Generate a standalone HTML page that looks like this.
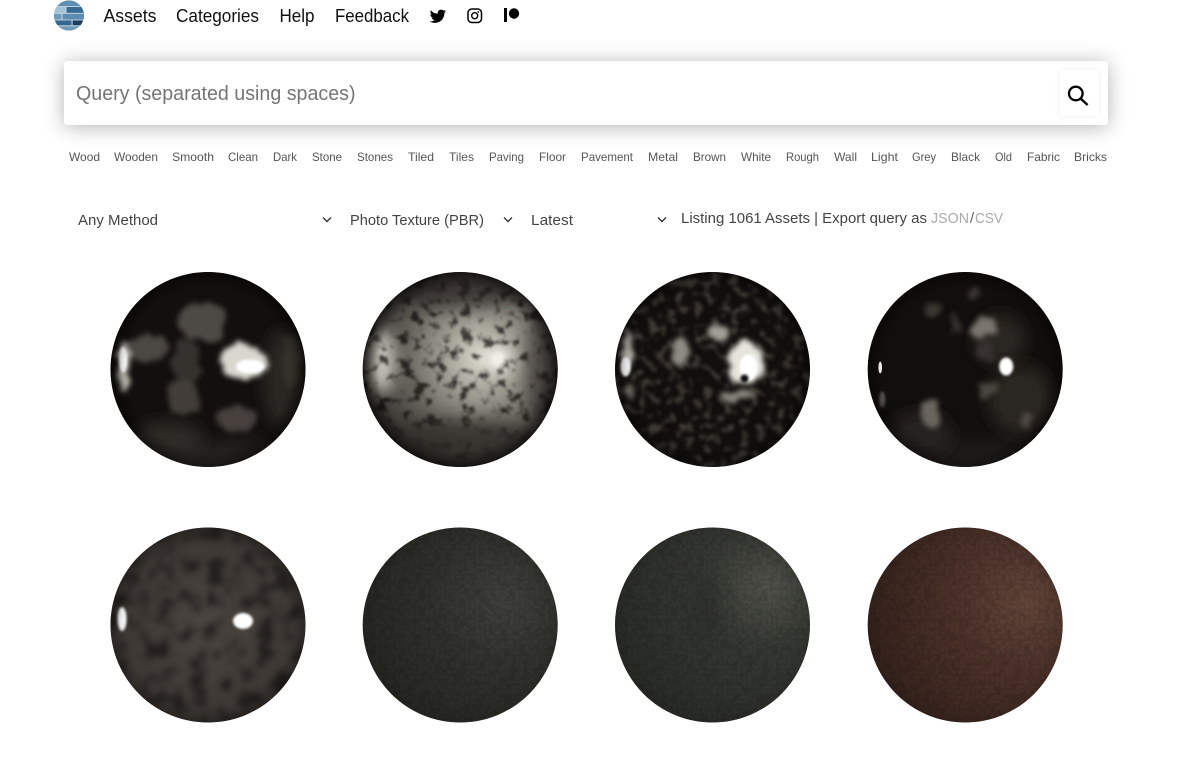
<!DOCTYPE html>
<html><head><meta charset="utf-8"><title>Assets</title>
<style>
html,body{margin:0;padding:0;background:#fff;width:1192px;height:760px;overflow:hidden}
.card{position:absolute;left:64px;top:61px;width:1044px;height:64px;background:#fff;border-radius:3px;box-shadow:0 2px 20px rgba(0,0,0,.3)}
.btn{position:absolute;left:1060px;top:70px;width:39px;height:46px;background:#fff;border-radius:2px;box-shadow:0 0 6px rgba(0,0,0,.07)}
svg{position:absolute;left:0;top:0}
text{font-family:"Liberation Sans",sans-serif}
.n{font-size:18px;fill:#111}
.t{font-size:12px;fill:#555}
.d{font-size:15px;fill:#444}
</style></head><body>
<div class="card"></div><div class="btn"></div>
<svg width="1192" height="760" viewBox="0 0 1192 760" xmlns="http://www.w3.org/2000/svg">
<defs>
<clipPath id="c"><circle r="97.5"/></clipPath>
<clipPath id="lg"><circle cx="69" cy="15.5" r="15"/></clipPath>
<filter id="b1" x="-50%" y="-50%" width="200%" height="200%"><feGaussianBlur stdDeviation="1.2"/></filter>
<filter id="b2" x="-50%" y="-50%" width="200%" height="200%"><feGaussianBlur stdDeviation="2.5"/></filter>
<filter id="b5" x="-60%" y="-60%" width="220%" height="220%"><feGaussianBlur stdDeviation="8"/></filter>
<filter id="rough" x="-100" y="-100" width="200" height="200" filterUnits="userSpaceOnUse"><feTurbulence type="fractalNoise" baseFrequency=".08" numOctaves="3" seed="5" result="n"/><feDisplacementMap in="SourceGraphic" in2="n" scale="12" xChannelSelector="R" yChannelSelector="G"/><feGaussianBlur stdDeviation="2.600"/></filter>
<filter id="splat" x="-100" y="-100" width="200" height="200" filterUnits="userSpaceOnUse" color-interpolation-filters="sRGB"><feTurbulence type="fractalNoise" baseFrequency=".085" numOctaves="4" seed="7"/><feColorMatrix values="0 0 0 0 .05 0 0 0 0 .045 0 0 0 0 .04 6 0 0 0 -3.200"/><feGaussianBlur stdDeviation="1.100"/></filter>
<filter id="spots" x="-100" y="-100" width="200" height="200" filterUnits="userSpaceOnUse" color-interpolation-filters="sRGB"><feTurbulence type="fractalNoise" baseFrequency=".11" numOctaves="2" seed="12"/><feColorMatrix values="0 0 0 0 .4 0 0 0 0 .37 0 0 0 0 .34 6 0 0 0 -3.100"/><feGaussianBlur stdDeviation="1.700"/></filter>
<filter id="mottle" x="-100" y="-100" width="200" height="200" filterUnits="userSpaceOnUse" color-interpolation-filters="sRGB"><feTurbulence type="fractalNoise" baseFrequency=".06" numOctaves="3" seed="4"/><feColorMatrix values="0 0 0 0 .1 0 0 0 0 .09 0 0 0 0 .085 4 0 0 0 -1.900"/><feGaussianBlur stdDeviation="3"/></filter>
<filter id="leather" x="-100" y="-100" width="200" height="200" filterUnits="userSpaceOnUse" color-interpolation-filters="sRGB"><feTurbulence type="turbulence" baseFrequency=".2" numOctaves="1" seed="3"/><feColorMatrix values="0 0 0 0 0 0 0 0 0 0 0 0 0 0 0 -5 0 0 0 1"/><feGaussianBlur stdDeviation=".4"/></filter>
<radialGradient id="rim" cx="50%" cy="50%" r="50%"><stop offset=".84" stop-color="#000" stop-opacity="0"/><stop offset=".97" stop-color="#000" stop-opacity=".55"/><stop offset="1" stop-color="#000" stop-opacity=".75"/></radialGradient>
<linearGradient id="lower" x1="0" y1="0" x2="0" y2="1"><stop offset=".8" stop-color="#6b665f" stop-opacity="0"/><stop offset="1" stop-color="#6b665f" stop-opacity=".35"/></linearGradient>
<radialGradient id="metal" cx="60%" cy="44%" r="62%"><stop offset="0" stop-color="#d6d6ca"/><stop offset=".28" stop-color="#a3a398"/><stop offset=".62" stop-color="#65625b"/><stop offset="1" stop-color="#2c2926"/></radialGradient>
<radialGradient id="g1" cx="72%" cy="38%" r="75%"><stop offset="0" stop-color="#40413b"/><stop offset=".5" stop-color="#30312c"/><stop offset="1" stop-color="#262722"/></radialGradient>
<radialGradient id="g2" cx="78%" cy="30%" r="80%"><stop offset="0" stop-color="#50524b"/><stop offset=".4" stop-color="#363832"/><stop offset="1" stop-color="#2a2c27"/></radialGradient>
<radialGradient id="br" cx="80%" cy="38%" r="82%"><stop offset="0" stop-color="#624539"/><stop offset=".45" stop-color="#4b3229"/><stop offset="1" stop-color="#35221c"/></radialGradient>
<radialGradient id="gm" cx="50%" cy="50%" r="55%"><stop offset="0" stop-color="#4c4641"/><stop offset="1" stop-color="#3a3531"/></radialGradient>
</defs>

<!-- logo -->
<g clip-path="url(#lg)">
<rect x="54" y="0" width="30" height="31" fill="#3f6f96"/>
<rect x="54" y="0" width="30" height="7" fill="#5f8fb0"/>
<rect x="54" y="7" width="12" height="6" fill="#a3c2d8"/><rect x="66" y="7" width="18" height="6" fill="#386a94"/>
<rect x="54" y="14" width="8" height="6" fill="#6f9bbb"/><rect x="62" y="14" width="22" height="6" fill="#5c8cb0"/>
<rect x="54" y="20.500" width="18" height="5" fill="#35668f"/><rect x="73" y="20.500" width="11" height="5" fill="#1d3f5c"/>
<rect x="54" y="26" width="30" height="5" fill="#6f9ab8"/>
<path d="M54 6.500H84M54 13.300H84M54 20H84M54 25.800H84M66 6.500V13.300M62 13.300V20M72 20V25.800" stroke="#d8e6ef" stroke-width=".8" fill="none"/>
</g>

<!-- nav -->
<text class="n" x="103.500" y="22" textLength="53" lengthAdjust="spacingAndGlyphs">Assets</text>
<text class="n" x="176" y="22" textLength="83" lengthAdjust="spacingAndGlyphs">Categories</text>
<text class="n" x="279.500" y="22" textLength="35" lengthAdjust="spacingAndGlyphs">Help</text>
<text class="n" x="335" y="22" textLength="74" lengthAdjust="spacingAndGlyphs">Feedback</text>
<path transform="translate(428.500,6.500) scale(.78)" fill="#000" d="M22.46,6C21.69,6.35 20.86,6.58 20,6.69C20.88,6.16 21.56,5.32 21.88,4.31C21.05,4.81 20.13,5.16 19.16,5.36C18.37,4.5 17.26,4 16,4C13.65,4 11.73,5.92 11.73,8.29C11.73,8.63 11.77,8.96 11.84,9.27C8.28,9.09 5.11,7.38 3,4.79C2.63,5.42 2.42,6.16 2.42,6.94C2.42,8.43 3.17,9.75 4.33,10.5C3.62,10.5 2.96,10.3 2.38,10C2.38,10 2.38,10 2.38,10.03C2.38,12.11 3.86,13.85 5.82,14.24C5.46,14.34 5.08,14.39 4.69,14.39C4.42,14.39 4.15,14.36 3.89,14.31C4.43,16 6,17.26 7.89,17.29C6.43,18.45 4.58,19.13 2.56,19.13C2.22,19.13 1.88,19.11 1.54,19.07C3.44,20.29 5.7,21 8.12,21C16,21 20.33,14.46 20.33,8.79C20.33,8.6 20.33,8.42 20.32,8.23C21.16,7.63 21.88,6.87 22.46,6Z"/>
<rect x="468" y="9" width="13.500" height="13.500" rx="3.800" fill="none" stroke="#000" stroke-width="1.500"/>
<circle cx="474.700" cy="15.700" r="3" fill="none" stroke="#000" stroke-width="1.400"/>
<circle cx="478.300" cy="12" r=".9" fill="#000"/>
<rect x="504" y="8" width="3" height="14" fill="#000"/>
<circle cx="514" cy="13.500" r="5.200" fill="#000"/>

<!-- search -->
<text x="76" y="100" font-size="20" fill="#757575" textLength="279.500" lengthAdjust="spacingAndGlyphs">Query (separated using spaces)</text>
<circle cx="1075.800" cy="93.500" r="6.800" fill="none" stroke="#000" stroke-width="2.300"/>
<path d="M1080.600 98.500l7 6.500" stroke="#000" stroke-width="2.400" fill="none"/>

<!-- tags -->
<g class="tags">
<text class="t" x="69" y="161" textLength="31" lengthAdjust="spacingAndGlyphs">Wood</text>
<text class="t" x="114" y="161" textLength="44" lengthAdjust="spacingAndGlyphs">Wooden</text>
<text class="t" x="172" y="161" textLength="42" lengthAdjust="spacingAndGlyphs">Smooth</text>
<text class="t" x="228" y="161" textLength="30" lengthAdjust="spacingAndGlyphs">Clean</text>
<text class="t" x="273" y="161" textLength="24" lengthAdjust="spacingAndGlyphs">Dark</text>
<text class="t" x="312" y="161" textLength="30" lengthAdjust="spacingAndGlyphs">Stone</text>
<text class="t" x="357" y="161" textLength="36" lengthAdjust="spacingAndGlyphs">Stones</text>
<text class="t" x="408" y="161" textLength="26" lengthAdjust="spacingAndGlyphs">Tiled</text>
<text class="t" x="449" y="161" textLength="25" lengthAdjust="spacingAndGlyphs">Tiles</text>
<text class="t" x="489" y="161" textLength="35" lengthAdjust="spacingAndGlyphs">Paving</text>
<text class="t" x="539" y="161" textLength="27" lengthAdjust="spacingAndGlyphs">Floor</text>
<text class="t" x="581" y="161" textLength="52" lengthAdjust="spacingAndGlyphs">Pavement</text>
<text class="t" x="648" y="161" textLength="30" lengthAdjust="spacingAndGlyphs">Metal</text>
<text class="t" x="693" y="161" textLength="33" lengthAdjust="spacingAndGlyphs">Brown</text>
<text class="t" x="741" y="161" textLength="30" lengthAdjust="spacingAndGlyphs">White</text>
<text class="t" x="786" y="161" textLength="33" lengthAdjust="spacingAndGlyphs">Rough</text>
<text class="t" x="834" y="161" textLength="23" lengthAdjust="spacingAndGlyphs">Wall</text>
<text class="t" x="871" y="161" textLength="27" lengthAdjust="spacingAndGlyphs">Light</text>
<text class="t" x="912" y="161" textLength="24" lengthAdjust="spacingAndGlyphs">Grey</text>
<text class="t" x="951" y="161" textLength="29" lengthAdjust="spacingAndGlyphs">Black</text>
<text class="t" x="995" y="161" textLength="17" lengthAdjust="spacingAndGlyphs">Old</text>
<text class="t" x="1027" y="161" textLength="33" lengthAdjust="spacingAndGlyphs">Fabric</text>
<text class="t" x="1074" y="161" textLength="33" lengthAdjust="spacingAndGlyphs">Bricks</text>
</g>

<!-- dropdowns -->
<text class="d" x="78" y="225" textLength="80" lengthAdjust="spacingAndGlyphs">Any Method</text>
<path d="M323 217.500l4 4 4-4" stroke="#333" stroke-width="1.400" fill="none"/>
<text class="d" x="350" y="225" textLength="134" lengthAdjust="spacingAndGlyphs">Photo Texture (PBR)</text>
<path d="M504 217.500l4 4 4-4" stroke="#333" stroke-width="1.400" fill="none"/>
<text class="d" x="531" y="225" textLength="42" lengthAdjust="spacingAndGlyphs">Latest</text>
<path d="M658 217.500l4 4 4-4" stroke="#333" stroke-width="1.400" fill="none"/>
<text class="d" x="681" y="223" textLength="246" lengthAdjust="spacingAndGlyphs">Listing 1061 Assets | Export query as</text>
<text class="d" x="931" y="223" style="fill:#aaa" textLength="38" lengthAdjust="spacingAndGlyphs">JSON</text>
<text class="d" x="970" y="223" style="fill:#666">/</text>
<text class="d" x="975" y="223" style="fill:#aaa" textLength="28" lengthAdjust="spacingAndGlyphs">CSV</text>

<!-- sphere 1 -->
<g transform="translate(208,369.500)"><g clip-path="url(#c)">
<rect x="-100" y="-100" width="200" height="200" fill="#12100e"/>
<rect x="-100" y="-100" width="200" height="200" fill="url(#lower)"/>
<ellipse cx="75" cy="10" rx="20" ry="50" fill="#2b2622" filter="url(#b5)"/>
<ellipse cx="-40" cy="70" rx="35" ry="18" fill="#2e2a26" filter="url(#b5)"/>
<g filter="url(#rough)">
<ellipse cx="-4" cy="-48" rx="24" ry="20" fill="#4e4944"/><ellipse cx="-60" cy="-21" rx="20" ry="13" fill="#4c4742"/>
<ellipse cx="-22" cy="-8" rx="14" ry="24" fill="#36322e"/><ellipse cx="-24" cy="28" rx="17" ry="19" fill="#423e39"/>
<ellipse cx="28" cy="50" rx="20" ry="13" fill="#46413c"/><ellipse cx="84" cy="-8" rx="9" ry="26" fill="#34302c"/>
<ellipse cx="36" cy="-8" rx="24" ry="18" fill="#d9d8d0"/>
<ellipse cx="-84" cy="-2" rx="6" ry="26" fill="#b9b8af"/>
</g>
<ellipse cx="42" cy="-3" rx="14" ry="7" fill="#fff" filter="url(#b1)"/>
<ellipse cx="-85" cy="-10" rx="4" ry="13" fill="#fff" filter="url(#b1)"/>
<circle r="97.500" fill="url(#rim)" opacity=".7"/>
</g></g>

<!-- sphere 2 -->
<g transform="translate(460.200,369.500)"><g clip-path="url(#c)">
<circle r="98" fill="url(#metal)"/>
<ellipse cx="-78" cy="-8" rx="12" ry="32" fill="#cfcfc4" filter="url(#b5)"/>
<ellipse cx="38" cy="-10" rx="13" ry="12" fill="#f4f4ec" filter="url(#b5)"/>
<rect x="-100" y="-100" width="200" height="200" filter="url(#splat)" opacity=".72"/>
<ellipse cx="38" cy="-10" rx="7" ry="7" fill="#f4f4ec" filter="url(#b2)" opacity=".8"/>
<ellipse cx="0" cy="-88" rx="90" ry="26" fill="#211e1b" opacity=".65" filter="url(#b5)"/>
<ellipse cx="0" cy="78" rx="95" ry="28" fill="#2e2a27" opacity=".75" filter="url(#b5)"/>
<ellipse cx="90" cy="0" rx="24" ry="70" fill="#211e1b" opacity=".55" filter="url(#b5)"/>
<circle r="97.500" fill="url(#rim)" opacity=".8"/>
</g></g>

<!-- sphere 3 -->
<g transform="translate(712.500,369.500)"><g clip-path="url(#c)">
<rect x="-100" y="-100" width="200" height="200" fill="#110f0d"/>
<rect x="-100" y="-100" width="200" height="200" filter="url(#spots)" opacity=".55"/>
<rect x="-100" y="40" width="200" height="60" fill="url(#lower)" opacity=".4"/>
<g filter="url(#rough)">
<ellipse cx="-32" cy="-18" rx="9" ry="14" fill="#8e8b83"/>
<ellipse cx="5" cy="-38" rx="13" ry="7" fill="#a3a097"/>
<ellipse cx="34" cy="-6" rx="18" ry="22" fill="#e6e5dd"/>
<ellipse cx="25" cy="26" rx="18" ry="5" fill="#8d8a81"/>
<ellipse cx="-85" cy="-20" rx="5" ry="22" fill="#bdbbb2"/>
<ellipse cx="-84" cy="22" rx="4" ry="10" fill="#77746c"/>
</g>
<ellipse cx="36" cy="-2" rx="9" ry="13" fill="#fff" filter="url(#b1)"/>
<circle cx="32" cy="9" r="4" fill="#111" filter="url(#b1)"/>
<ellipse cx="-87" cy="-3" rx="5" ry="10" fill="#fff" filter="url(#b1)"/>
<circle r="97.500" fill="url(#rim)" opacity=".6"/>
</g></g>

<!-- sphere 4 -->
<g transform="translate(965.200,369.500)"><g clip-path="url(#c)">
<rect x="-100" y="-100" width="200" height="200" fill="#110f0d"/>
<rect x="-100" y="-100" width="200" height="200" fill="url(#lower)" opacity=".7"/>
<ellipse cx="55" cy="30" rx="32" ry="35" fill="#2b2724" filter="url(#b5)"/>
<ellipse cx="-45" cy="65" rx="32" ry="22" fill="#282421" filter="url(#b5)"/>
<ellipse cx="35" cy="-30" rx="25" ry="25" fill="#2a2724" filter="url(#b5)"/>
<g filter="url(#rough)">
<ellipse cx="19" cy="-42" rx="13" ry="10" fill="#7a756e" transform="rotate(-25 19 -42)"/>
<ellipse cx="-36" cy="44" rx="10" ry="15" fill="#6b665f" transform="rotate(-20 -36 44)"/>
<ellipse cx="-32" cy="-60" rx="10" ry="6" fill="#3b3733"/>
<ellipse cx="-10" cy="-45" rx="5" ry="9" fill="#35312e"/>
<ellipse cx="8" cy="-75" rx="6" ry="5" fill="#3a3632"/>
<ellipse cx="22" cy="20" rx="10" ry="7" fill="#4a4641"/>
<ellipse cx="20" cy="-18" rx="9" ry="10" fill="#37332f"/>
<ellipse cx="62" cy="50" rx="6" ry="7" fill="#4f4a45"/>
</g>
<ellipse cx="41" cy="-3" rx="7" ry="9" fill="#fff" filter="url(#b1)"/>
<ellipse cx="-85" cy="-2" rx="1.800" ry="6" fill="#fff"/>
<ellipse cx="-83" cy="30" rx="3" ry="8" fill="#615c56" filter="url(#b1)"/>
<circle r="97.500" fill="url(#rim)" opacity=".6"/>
</g></g>

<!-- sphere 5 -->
<g transform="translate(208,625)"><g clip-path="url(#c)">
<circle r="98" fill="url(#gm)"/>
<rect x="-100" y="-100" width="200" height="200" filter="url(#mottle)" opacity=".8"/>
<ellipse cx="35" cy="-4" rx="10" ry="8" fill="#fff" filter="url(#b1)"/>
<ellipse cx="-86" cy="-6" rx="4.500" ry="12" fill="#fff" filter="url(#b1)"/>
<circle r="97.500" fill="url(#rim)" opacity=".4"/>
</g></g>

<!-- sphere 6 -->
<g transform="translate(460.200,625)"><g clip-path="url(#c)">
<circle r="98" fill="url(#g1)"/>
<rect x="-100" y="-100" width="200" height="200" filter="url(#leather)" opacity=".16"/>
<circle r="97.500" fill="url(#rim)" opacity=".1"/>
</g></g>

<!-- sphere 7 -->
<g transform="translate(712.500,625)"><g clip-path="url(#c)">
<circle r="98" fill="url(#g2)"/>
<rect x="-100" y="-100" width="200" height="200" filter="url(#leather)" opacity=".16"/>
<ellipse cx="-5" cy="-20" rx="12" ry="30" fill="#1f211d" opacity=".25" filter="url(#b5)"/>
<circle r="97.500" fill="url(#rim)" opacity=".1"/>
</g></g>

<!-- sphere 8 -->
<g transform="translate(965.200,625)"><g clip-path="url(#c)">
<circle r="98" fill="url(#br)"/>
<rect x="-100" y="-100" width="200" height="200" filter="url(#leather)" opacity=".16"/>
<circle r="97.500" fill="url(#rim)" opacity=".1"/>
</g></g>
</svg>
</body></html>
